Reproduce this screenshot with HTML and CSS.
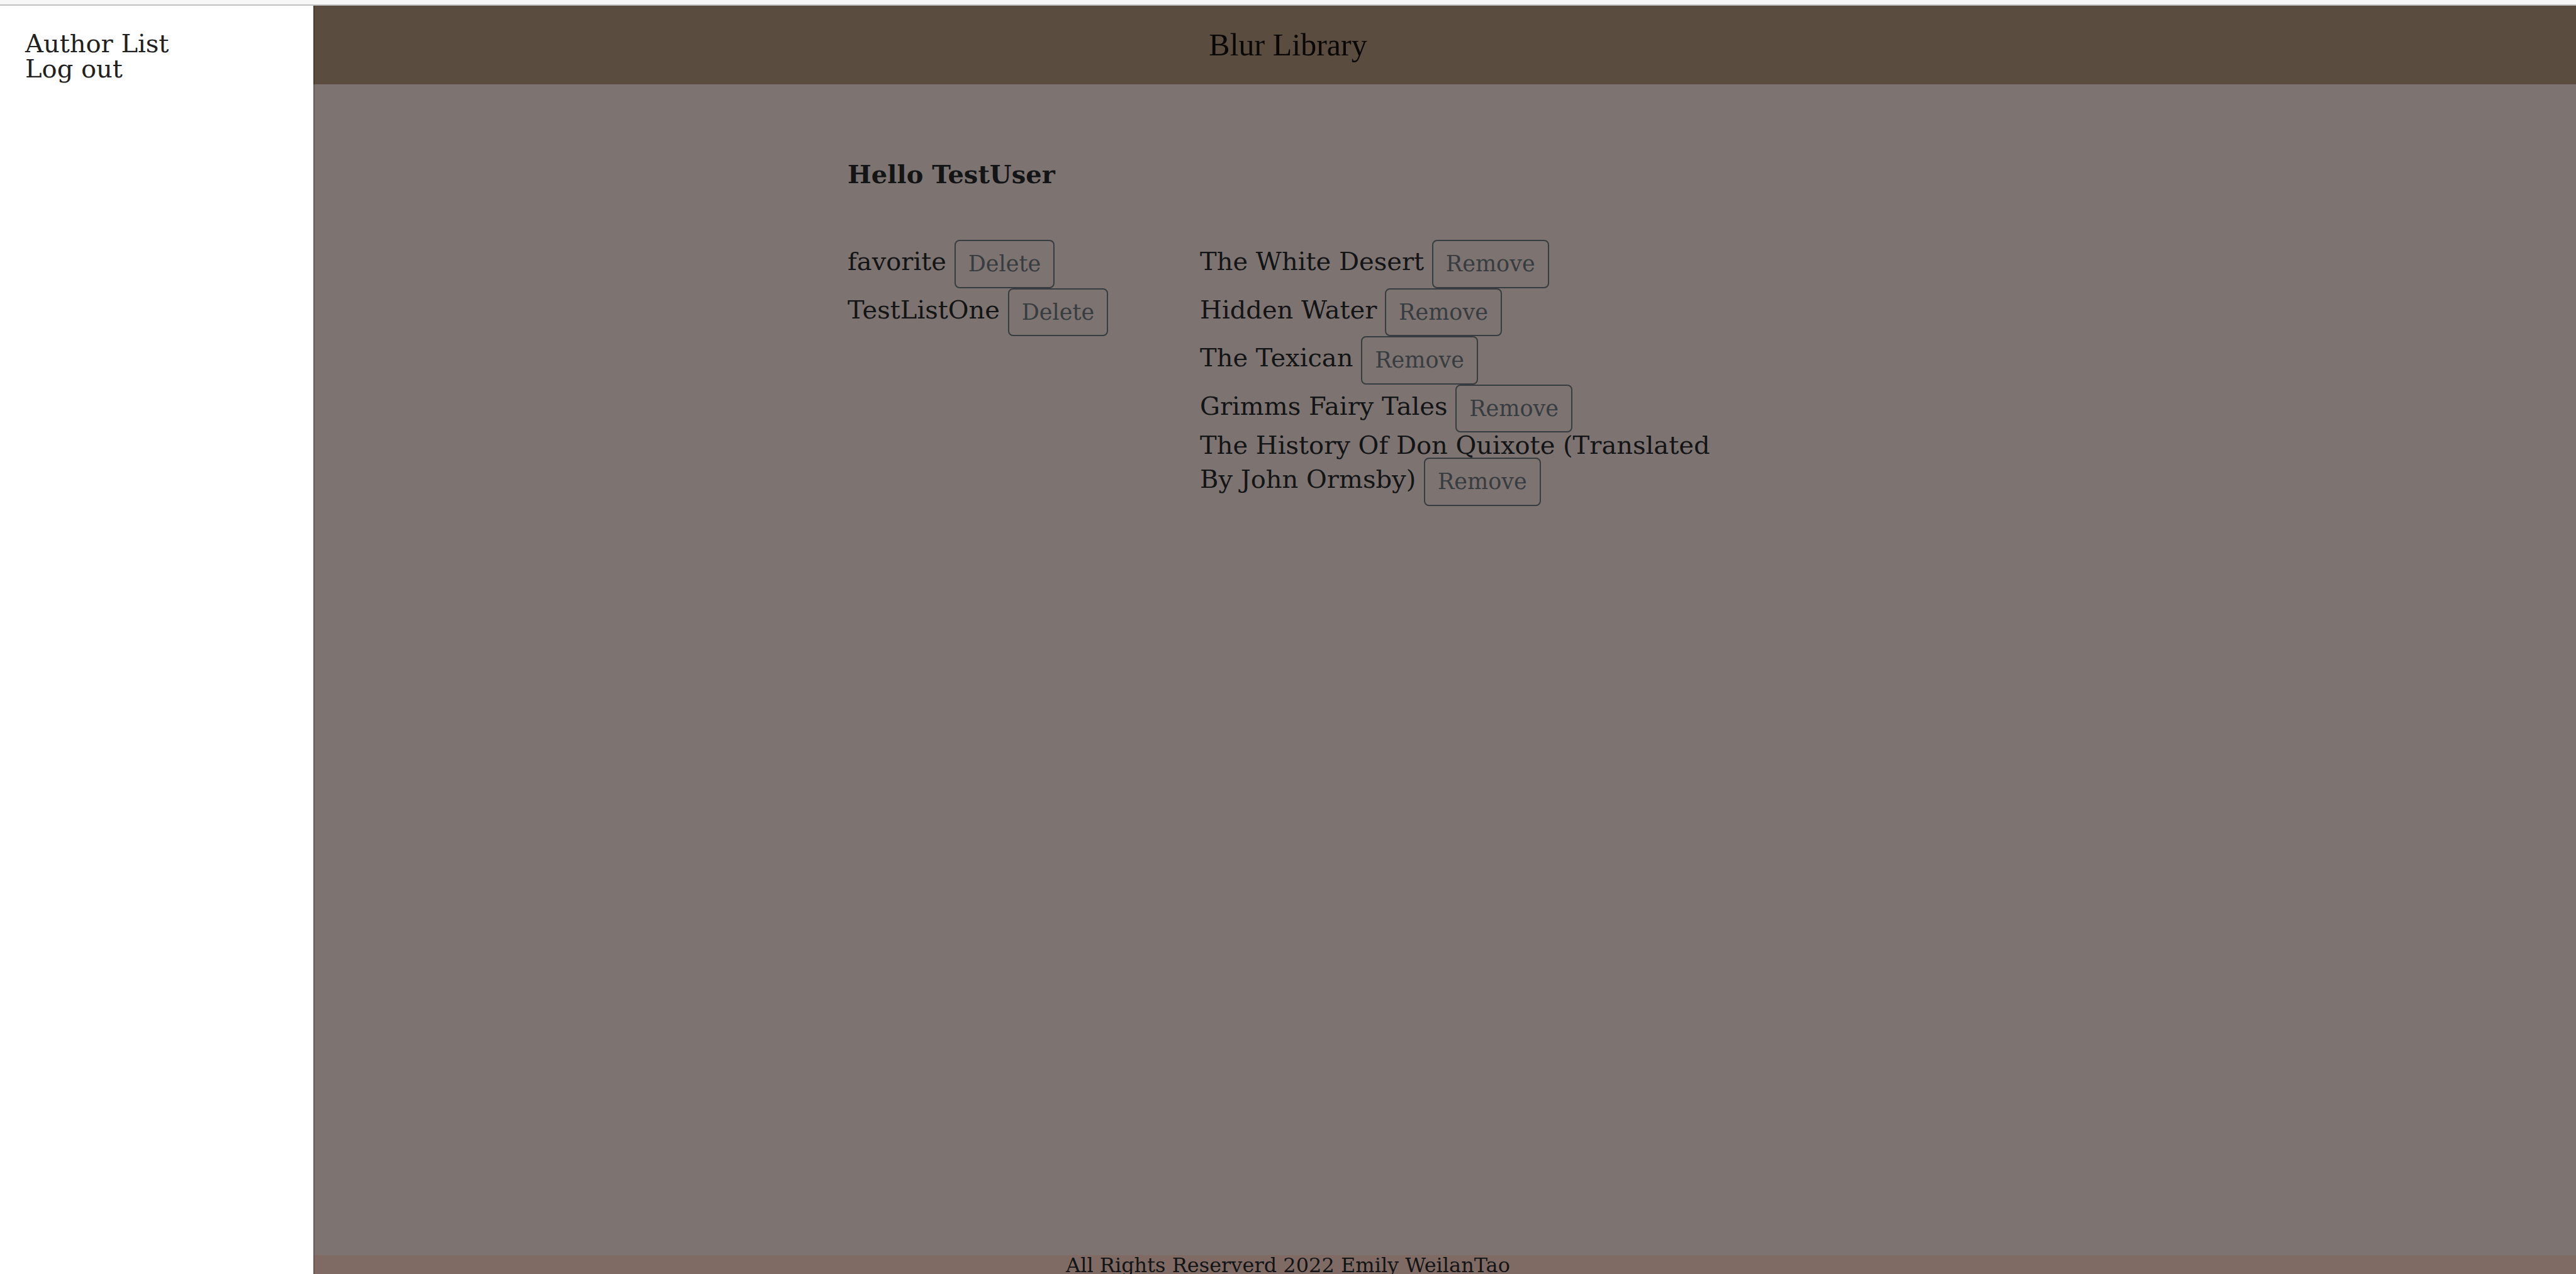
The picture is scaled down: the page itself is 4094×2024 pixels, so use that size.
FILE: index.html
```html
<!DOCTYPE html>
<html lang="en">
<head>
<meta charset="utf-8">
<title>Blur Library</title>
<link rel="stylesheet" href="styles.css">
</head>
<body>
<div class="window-edge"></div>
<div class="page">
  <header class="site-header"><h1 class="brand">Blur Library</h1></header>
  <main class="content">
    <h2 class="greeting">Hello TestUser</h2>
    <div class="columns">
      <ul class="rows">
        <li>favorite <button class="btn" type="button">Delete</button></li>
        <li>TestListOne <button class="btn" type="button">Delete</button></li>
      </ul>
      <ul class="rows">
        <li>The White Desert <button class="btn" type="button">Remove</button></li>
        <li>Hidden Water <button class="btn" type="button">Remove</button></li>
        <li>The Texican <button class="btn" type="button">Remove</button></li>
        <li>Grimms Fairy Tales <button class="btn" type="button">Remove</button></li>
        <li>The History Of Don Quixote (Translated By John Ormsby) <button class="btn" type="button">Remove</button></li>
      </ul>
    </div>
  </main>
  <footer class="site-footer">All Rights Reserverd 2022 Emily WeilanTao</footer>
  <nav class="drawer" aria-label="Menu">
    <a href="#authors">Author List</a>
    <a href="#logout">Log out</a>
  </nav>
</div>
</body>
</html>
```
FILE: styles.css
```css
* {
  box-sizing: border-box;
}

body {
  display: flex;
  flex-direction: column;
  height: 100vh;
  margin: 0;
  overflow: hidden;
  background: #7d7370;
  color: #121416;
  font-family: "DejaVu Serif", serif;
  font-size: 40px;
  line-height: 1;
}

.window-edge {
  flex: none;
  height: 9px;
  background: #f7f7f7;
  border-bottom: 2px solid #c0c0c0;
}

.page {
  position: relative;
  display: flex;
  flex: 1;
  flex-direction: column;
}

.site-header {
  padding: 25px;
  background: #5a4c3f;
  text-align: center;
}

.brand {
  margin: 0;
  color: #090807;
  font-family: "Liberation Serif", serif;
  font-size: 50px;
  font-weight: 400;
  line-height: 75px;
}

.content {
  flex: 1;
  width: 100%;
  max-width: 1400px;
  margin: 0 auto;
  padding-top: 123px;
}

.greeting {
  margin: 0 0 84px;
  font-size: 40px;
  font-weight: 700;
}

.columns {
  display: grid;
  grid-template-columns: 2fr 3fr;
}

.rows {
  margin: 0;
  padding: 0;
  list-style: none;
}

.btn {
  padding: 10px 20px;
  border: 2px solid #373c40;
  border-radius: 8px;
  background: transparent;
  color: #373c40;
  font-family: inherit;
  font-size: 35px;
  line-height: 1.5;
  vertical-align: middle;
}

.site-footer {
  height: 30px;
  background: #806b64;
  font-size: 32px;
  text-align: center;
}

.drawer {
  position: absolute;
  top: 0;
  bottom: 0;
  left: 0;
  display: flex;
  flex-direction: column;
  width: 500px;
  padding: 40px;
  border-right: 2px solid rgba(0, 0, 0, 0.2);
  background: #fff;
  background-clip: padding-box;
}

.drawer a {
  color: #212121;
  text-decoration: none;
}
```
